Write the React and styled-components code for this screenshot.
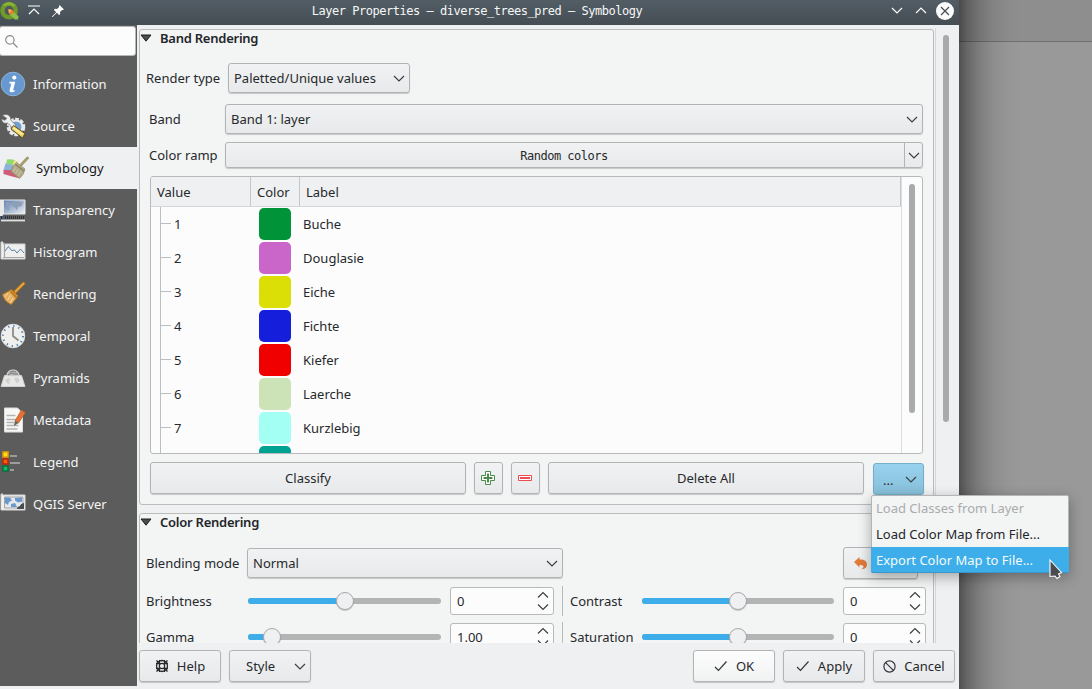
import React from "react";
import styled, { createGlobalStyle, css } from "styled-components";

const Global = createGlobalStyle`
  * { box-sizing: border-box; }
  html, body { margin: 0; height: 100%; overflow: hidden; }
  body {
    font-family: "Noto Sans", "Open Sans", sans-serif;
    font-size: 13px;
    line-height: 18px;
    color: #26292c;
  }
  #root { height: 100%; }
  svg { display: block; flex: none; }
`;

const Desktop = styled.div`
  display: flex;
  width: 1092px;
  height: 689px;
  position: relative;
  overflow: hidden;
  background: #999999;
`;
const Window = styled.div`
  width: 959px;
  height: 689px;
  display: flex;
  flex-direction: column;
  background: #eff0f1;
`;
const Backdrop = styled.div`
  flex: 1;
  background:
    linear-gradient(90deg, rgba(0,0,0,.48) 0, rgba(0,0,0,.33) 8px, rgba(0,0,0,.19) 20px, rgba(0,0,0,.08) 34px, rgba(0,0,0,.02) 50px, rgba(0,0,0,0) 62px),
    linear-gradient(180deg, #8e8e8e 0, #8e8e8e 41px, #707070 41px, #707070 42px, #999999 42px);
`;
const TitleBar = styled.header`
  height: 25px;
  flex: none;
  display: flex;
  align-items: center;
  background: linear-gradient(180deg, #525d65, #454d54);
  color: #f6f7f7;
`;
const TitleSide = styled.div`
  display: flex;
  align-items: center;
  height: 22px;
  margin-top: -4px;
  width: 150px;
  justify-content: ${(p) => (p.$end ? "flex-end" : "flex-start")};
  gap: ${(p) => p.$gap}px;
  padding-right: ${(p) => (p.$end ? 5 : 0)}px;
`;
const WindowControls = styled.div`
  display: flex;
  gap: 12px;
`;
const Mono = styled.span`
  font-family: "DejaVu Sans Mono", "Liberation Mono", monospace;
  font-size: 12px;
  letter-spacing: -0.48px;
  white-space: pre;
`;
const Title = styled.h1`
  flex: 1;
  margin: -3px 5px 0 0;
  text-align: center;
  font-weight: 400;
  font-size: 12px;
  line-height: 18px;
`;
const Body = styled.div`
  flex: 1;
  min-height: 0;
  display: flex;
`;
const Sidebar = styled.nav`
  width: 137px;
  height: 661px;
  flex: none;
  background: #5c5c5c;
`;
const Search = styled.div`
  width: 137px;
  height: 30px;
  margin: 1px 0 7px -1px;
  padding-left: 5px;
  display: flex;
  align-items: center;
  background: #fcfcfc;
  border: 1px solid #b5b7b8;
  border-radius: 3px;
`;
const NavItem = styled.div`
  height: 42px;
  display: flex;
  align-items: center;
  gap: 7px;
  color: #f3f4f4;
  ${(p) => p.$active && css`
    background: #eff0f1;
    color: #17191b;
    padding-left: 3px;
  `}
`;
const Main = styled.main`
  flex: 1;
  display: flex;
  flex-direction: column;
`;
const Scroll = styled.div`
  height: 618px;
  overflow: hidden;
  display: flex;
  flex: none;
`;
const Groups = styled.div`
  width: 799px;
  margin-top: 3px;
  padding: 1px 0 0 2px;
  border-right: 1px solid #d6d8d9;
  display: flex;
  flex-direction: column;
  gap: 8px;
  flex: none;
`;
const Group = styled.section`
  width: 795px;
  height: ${(p) => p.$height}px;
  flex: none;
  border: 1px solid #babcbd;
  border-radius: 3px;
  background: #f3f4f4;
`;
const GroupTitle = styled.h2`
  display: flex;
  align-items: center;
  gap: 8px;
  margin: -1px 0 0;
  height: 18px;
  font-size: 13px;
  font-weight: 600;
  letter-spacing: -0.25px;
  color: #232629;
`;
const Field = styled.div`
  display: flex;
  align-items: center;
  height: ${(p) => p.$height || 30}px;
  margin-top: ${(p) => p.$top}px;
`;
const Label = styled.label`
  width: ${(p) => p.$width}px;
  padding-left: ${(p) => p.$indent || 6}px;
  flex: none;
  white-space: nowrap;
`;
const raised = css`
  border: 1px solid #b1b3b5;
  border-radius: 3px;
  background: linear-gradient(180deg, #f1f2f3, #e8e9ea);
  box-shadow: 0 1px 1px rgba(0, 0, 0, 0.18);
`;
const Combo = styled.div`
  ${raised}
  width: ${(p) => p.$width}px;
  height: 30px;
  padding: 0 4px 0 5px;
  display: flex;
  align-items: center;
  justify-content: space-between;
`;
const Ramp = styled.div`
  ${raised}
  width: 698px;
  height: 26px;
  display: flex;
  align-items: stretch;
`;
const RampName = styled.div`
  flex: 1;
  display: flex;
  align-items: center;
  justify-content: center;
  padding: 1px 2px 0 0;
`;
const RampArrow = styled.div`
  width: 18px;
  border-left: 1px solid #b1b3b5;
  display: flex;
  align-items: center;
  justify-content: center;
`;
const Button = styled.button`
  ${raised}
  width: ${(p) => p.$width}px;
  height: 32px;
  margin: 0;
  padding: 0;
  display: flex;
  align-items: center;
  justify-content: center;
  gap: 8px;
  font: inherit;
  color: inherit;
  flex: none;
  ${(p) => p.$primary && css`background: linear-gradient(180deg, #fdfdfd, #f1f2f2);`}
`;
const IconButton = styled(Button)`
  padding-right: 1px;
`;
const StyleButton = styled(Button)`
  justify-content: space-between;
  padding: 0 4px 0 16px;
`;
const MoreButton = styled(Button)`
  height: 32px;
  margin: 1px 0 0 1px;
  padding: 0 6px 0 9px;
  justify-content: space-between;
  background: linear-gradient(180deg, #98d2ee, #87bfda);
  border-color: #74aecb;
`;
const Dots = styled.span`
  padding-top: 2px;
`;
const Table = styled.div`
  width: 773px;
  height: 278px;
  margin: 8px 0 0 10px;
  border: 1px solid #b7b9ba;
  border-radius: 3px;
  background: #fcfcfc;
  display: flex;
  overflow: hidden;
`;
const TableMain = styled.div`
  width: 751px;
  border-right: 1px solid #dcdedf;
  flex: none;
`;
const TableHead = styled.div`
  height: 30px;
  display: flex;
  background: #eff0f1;
  border-bottom: 1px solid #d5d7d8;
`;
const Th = styled.div`
  width: ${(p) => p.$width}px;
  padding: 6px 0 0 6px;
  border-right: 1px solid #c4c6c7;
`;
const Rows = styled.div`
  margin-left: 9px;
  border-left: 1px solid #bcbebf;
`;
const Row = styled.div`
  height: 34px;
  display: flex;
  align-items: center;
`;
const Branch = styled.span`
  width: 10px;
  height: 1px;
  background: #bcbebf;
  margin-top: -1px;
`;
const Value = styled.span`
  width: 88px;
  padding-left: 3px;
`;
const Swatch = styled.span`
  width: 32px;
  height: 32px;
  border-radius: 5px;
  background: ${(p) => p.$color};
  margin-right: 12px;
`;
const Bar = styled.div`
  width: 6px;
  height: ${(p) => p.$height}px;
  margin: ${(p) => p.$top}px 0 0 7px;
  border-radius: 3px;
  background: #a9aaab;
`;
const Actions = styled.div`
  display: flex;
  gap: 8px;
  margin: 8px 0 0 10px;
  height: 32px;
`;
const Spacer = styled.div`
  flex: 1;
`;
const Reset = styled(Button)`
  justify-content: flex-start;
  padding-left: 10px;
  margin-right: 15px;
`;
const Slider = styled.div`
  width: ${(p) => p.$width}px;
  height: 6px;
  display: flex;
  align-items: center;
  border-radius: 3px;
  background: #b3b4b4;
  flex: none;
`;
const Fill = styled.div`
  width: ${(p) => p.$width}px;
  height: 6px;
  border-radius: 3px 0 0 3px;
  background: #3daee9;
`;
const Knob = styled.div`
  width: 18px;
  height: 18px;
  border: 1px solid #a6a8aa;
  border-radius: 50%;
  background: #eff0f1;
  box-shadow: 0 1px 1px rgba(0, 0, 0, 0.2);
`;
const Spin = styled.div`
  width: ${(p) => p.$width}px;
  height: 28px;
  margin-left: 9px;
  padding: 0 4px 0 6px;
  display: flex;
  align-items: center;
  justify-content: space-between;
  border: 1px solid #b7b9ba;
  border-radius: 3px;
  background: #fcfcfc;
`;
const Divider = styled.div`
  width: 1px;
  height: 30px;
  margin-left: 8px;
  background: #b7b9ba;
`;
const Footer = styled.footer`
  display: flex;
  gap: 8px;
  padding: 7px 4px 0 2px;
`;
const Menu = styled.div`
  position: absolute;
  left: 871px;
  top: 495px;
  width: 198px;
  height: 78px;
  border: 1px solid #b3b5b6;
  border-radius: 2px;
  background: #f3f4f4;
  box-shadow: 0 4px 14px rgba(0, 0, 0, 0.32);
`;
const MenuItem = styled.div`
  height: 26px;
  padding: 3px 0 0 4px;
  white-space: nowrap;
  color: ${(p) => (p.$disabled ? "#a9abac" : p.$selected ? "#f4fafd" : "#232629")};
  ${(p) => p.$selected && css`
    background: #3daee9;
    margin: -1px -1px 0;
    padding: 4px 0 0 5px;
    border-radius: 0 0 2px 2px;
    border-bottom: 1px solid #3597cc;
  `}
`;
const Pointer = styled.svg`
  position: absolute;
  left: 1048px;
  top: 558px;
`;

const Chevron = ({ up, color = "#3b3f43" }) => (
  <svg width="12" height="7" viewBox="0 0 12 7" fill="none" stroke={color} strokeWidth="1.2">
    <path d={up ? "M1 6 6 1l5 5" : "M1 1l5 5 5-5"} />
  </svg>
);
const Steps = () => (
  <svg width="12" height="20" viewBox="0 0 12 20" fill="none" stroke="#3b3f43" strokeWidth="1.2">
    <path d="M1 6.500l5-5 5 5M1 13.500l5 5 5-5" />
  </svg>
);
const Check = () => (
  <svg width="14" height="12" viewBox="0 0 14 12" fill="none" stroke="#33373a" strokeWidth="1.2">
    <path d="M1 7l3.500 3.500L12.500 1.500" />
  </svg>
);
const Forbid = () => (
  <svg width="13" height="13" viewBox="0 0 13 13" fill="none" stroke="#33373a" strokeWidth="1.2">
    <circle cx="6.500" cy="6.500" r="5.600" /><path d="M2.600 2.600l7.800 7.800" />
  </svg>
);
const Lifebuoy = () => (
  <svg width="14" height="14" viewBox="0 0 14 14" fill="none" stroke="#26292c">
    <circle cx="7" cy="7" r="5.500" strokeWidth="1.300" />
    <circle cx="7" cy="7" r="2.700" strokeWidth="1.200" />
    <path d="M1 4.500h3.500V1M9.500 1v3.500H13M13 9.500H9.500V13M4.500 13V9.500H1" strokeWidth="1.300" />
    <path d="M1.500 1.500l2 2M12.500 1.500l-2 2M12.500 12.500l-2-2M1.500 12.500l2-2" strokeWidth="1.400" />
  </svg>
);
const Logo = () => (
  <svg width="20" height="20" viewBox="0 0 21 20">
    <circle cx="9.500" cy="9.500" r="7" fill="none" stroke="#6f9c28" strokeWidth="4.600" />
    <path d="M4 4.500a7.600 7.600 0 0 1 11 0" fill="none" stroke="#8ab536" strokeWidth="2.500" />
    <path d="M9 8.500l3 .3 7.500 7-.5 3.200h-3.500L9 12z" fill="#8cc04a" />
    <path d="M8.500 7.800l4 .7 2.500 3-3 2.500-3-2.500z" fill="#ee7d2e" />
    <path d="M9 8.500l2.800 1-1.600 1.700z" fill="#f9c9a0" />
  </svg>
);
const Shade = () => (
  <svg width="12" height="10" viewBox="0 0 12 10" fill="none" stroke="#fff" strokeWidth="1.200">
    <path d="M0 1h12M1 9l5-5 5 5" />
  </svg>
);
const Pin = () => (
  <svg width="12" height="12" viewBox="0 0 12 12">
    <path d="M7.500 0L12 4.500l-1.300.6-.6-.2L8 7l.2 2.300-1.200.7-2.200-2.200L.6 12H0v-.6l4.200-4.200L2 5l.7-1.200L5 4l2.100-2.100L6.900 1.300z" fill="#fff" />
  </svg>
);
const Close = () => (
  <svg width="18" height="18" viewBox="0 0 18 18">
    <circle cx="9" cy="9" r="9" fill="#fcfcfc" />
    <path d="M5 5l8 8M13 5l-8 8" stroke="#464e55" strokeWidth="1.200" />
  </svg>
);
const Icon = ({ children }) => <svg width="26" height="26" viewBox="0 0 26 26">{children}</svg>;

const InfoIcon = () => (
  <Icon>
    <circle cx="13" cy="13" r="11.800" fill="#6798cf" stroke="#8db4dd" strokeWidth="1" />
    <circle cx="14.300" cy="6.600" r="2.100" fill="#fff" />
    <path d="M9.500 10.800h5.800l-2.200 8.300c0 .8 1 .4 2 -.2l-.3 1.300c-2 1.300-5.600 1.800-5.200-.9l1.700-6.800H9.200z" fill="#fff" />
  </Icon>
);
const SourceIcon = () => (
  <Icon>
    <circle cx="16" cy="14" r="7.500" fill="none" stroke="#e6e7e7" strokeWidth="3.600" strokeDasharray="3.500 1.400" />
    <circle cx="16" cy="14" r="6.500" fill="#729fcf" stroke="#eceded" strokeWidth="2" />
    <path d="M2.500 2.500C6.500 0 11 2.500 10.800 7l5 5.200-3 3L7.500 10C4.500 11 2 9.500 1.500 6l3.500 1.300L6.800 5.300z" fill="#eef0ef" stroke="#707372" strokeWidth=".7" />
    <path d="M13.500 12.500l11.500 8-2.500 4.500-11.500-9z" fill="#f2d35f" stroke="#5e5025" strokeWidth="1" />
    <path d="M13.500 14.800l9 6.500" stroke="#fbf0a8" strokeWidth="1.500" />
  </Icon>
);
const SymbologyIcon = () => (
  <Icon>
    <path d="M4 4.500q5-1 8 1l-1 5-8-1z" fill="#8fdc6c" />
    <path d="M2.500 8.500l9 1.500-2 6-9-1z" fill="#8cb2da" />
    <path d="M11 5.500l5 1-4 5-2.500-.500z" fill="#ecdf8d" />
    <path d="M.5 15l9 0 7 4.500-1.500 3.500q-8-2-14.500-4z" fill="#cf5d78" />
    <path d="M24.500 3l-6.500 7" stroke="#a59e70" strokeWidth="2.800" strokeLinecap="round" />
    <path d="M13.500 7.500l8.500 6.500q-1 5.500-5.500 9.500L8 16.500q1-5.500 5.500-9z" fill="#b3aa8a" stroke="#8b8463" strokeWidth=".7" />
    <path d="M12.500 9.500l8.500 6.500" stroke="#857e60" strokeWidth="1.200" />
    <path d="M12.500 12.500l-2.500 4M15 14.500l-2.500 4M17.500 16.500L15 21" stroke="#d0caae" strokeWidth="1" />
  </Icon>
);
const TransparencyIcon = () => (
  <Icon>
    <defs><linearGradient id="sea" x2="1" y2="1"><stop stopColor="#5479ae" /><stop offset="1" stopColor="#f1f3f4" /></linearGradient></defs>
    <path d="M3.500 3H25v14H3.500z" fill="url(#sea)" stroke="#e9eaea" />
    <path d="M5 5l4-.5 2 2-3 2 1.500 4-2 1zM13 6l4-1.500 6 1-2 4-3 0-1 4-2-3-2-1z" fill="#8e9fb5" />
    <path d="M0 2.500h3.500V19H0z" fill="#e9e9e8" />
    <path d="M1 20.500h24" stroke="#292b2c" strokeWidth="2.500" strokeDasharray="1 1" />
    <path d="M3.500 18v6" stroke="#315d9b" strokeWidth="1.500" /><path d="M1 23.500h24" stroke="#dfe0e0" strokeWidth="1.800" />
  </Icon>
);
const HistogramIcon = () => (
  <Icon>
    <path d="M3 5h22v15H1V3h2z" fill="#efefee" stroke="#d1d2d1" />
    <path d="M4.500 4v14M3 18.500h21" stroke="#a5a7a6" strokeWidth="1.200" />
    <path d="M5 12l3.500-4.500 3 4 3-.5 2.500 3 3.500-4 3.500 4" fill="none" stroke="#5a7ca7" />
  </Icon>
);
const BrushIcon = () => (
  <Icon>
    <path d="M23.500 2.500l-8 8" stroke="#a96b16" strokeWidth="3.600" strokeLinecap="round" />
    <path d="M23.500 2.500l-8 8" stroke="#e2a747" strokeWidth="2" strokeLinecap="round" />
    <path d="M11.500 8.500l6.500 6.500-6.500 8.500C7 22 3.500 18 2.500 13.500z" fill="#e3af62" stroke="#b27216" />
    <path d="M10.500 10l6 6.500" stroke="#c17b1d" strokeWidth="2.500" />
    <path d="M8 12l-3 4M10.500 14.500l-3 4.500M13 17l-3 5" stroke="#f6d9a5" strokeWidth="1" />
  </Icon>
);
const ClockIcon = () => (
  <Icon>
    <circle cx="13" cy="13" r="11.800" fill="#efefee" stroke="#dddedd" />
    <circle cx="13" cy="13" r="10" fill="none" stroke="#4b83bd" strokeWidth="2" strokeDasharray="1.300 3.936" />
    <path d="M13 4v9l5.500 4.500" fill="none" stroke="#8a8b8a" strokeWidth="1.800" />
  </Icon>
);
const PyramidIcon = () => (
  <Icon>
    <path d="M4.500 10.500h17L25 21.500H1z" fill="#e8e8e7" stroke="#cfd0cf" />
    <path d="M7 9.500q1-4.500 6-4.500t6 4.500l1 1.500H6z" fill="#b6b7b6" stroke="#dcdddc" />
    <path d="M10 7q3-2 6 0M8 10l3-2 3 1 4 0" stroke="#777978" fill="none" />
    <path d="M5 15l3-2 3 1-2 2 1 3-3-1zM14 13l4-.5 2 3-3 3-2-3z" fill="#cfd0cf" />
  </Icon>
);
const MetadataIcon = () => (
  <Icon>
    <path d="M4.500 1h13l5 5v19h-18z" fill="#f7f7f6" stroke="#dcdddb" />
    <path d="M6.500 8.500h9M6.500 12.500h9M6.500 15.500h8M6.500 18.500h12M6.500 22h11" stroke="#b3b4b3" strokeWidth="1.300" />
    <path d="M21.500 3l4 2.500-7 10.500-3.500-2.500z" fill="#e07236" stroke="#b8521f" strokeWidth=".6" />
    <path d="M15 13.500l3.500 2.500-4.500 3z" fill="#6d6256" />
  </Icon>
);
const LegendIcon = () => (
  <Icon>
    <path d="M10 7h7M10 14h10M10 21h4" stroke="#9b9c9b" strokeWidth="2" />
    <g strokeWidth="1.500">
      <path d="M3 3h5v5H3z" fill="#fce212" stroke="#e79e06" />
      <path d="M3 10h5v5H3z" fill="#ff5a12" stroke="#bd2800" />
      <path d="M3 17h5v5H3z" fill="#12bd68" stroke="#06723c" />
    </g>
  </Icon>
);
const ServerIcon = () => (
  <Icon>
    <path d="M2 4h23v15H1V3h2" fill="#f2f2f1" stroke="#d3d4d3" />
    <path d="M4.500 6H23v11H4.500z" fill="#e5e9ec" stroke="#8c8e8d" strokeWidth=".8" />
    <path d="M5 6.500h5l2 3-3 1.500-1 3-3-2zM15 7l7-.5v4l-4 1-3-2zM11 13l4-1 2 4h-6z" fill="#6b98cb" />
    <path d="M24 12v6h-7q0-2.500 3-3 .5-2.500 4-3z" fill="#4b4d4d" />
  </Icon>
);
const SearchIcon = () => (
  <svg width="13" height="13" viewBox="0 0 13 13" fill="none" stroke="#8a8c8e" strokeWidth="1.200">
    <circle cx="4.900" cy="4.900" r="4.200" /><path d="M8 8l4.500 4.500" />
  </svg>
);
const Triangle = () => (
  <svg width="12" height="8" viewBox="0 0 12 8"><path d="M1 1h10L6 7.200z" fill="#4d4d4d" stroke="#1f1f1f" /></svg>
);
const PlusIcon = () => (
  <svg width="14" height="14" viewBox="0 0 14 14" fill="#fff" stroke="#4c8a4c">
    <path d="M4.500.5h5v4h4v5h-4v4h-5v-4h-4v-5h4z" /><path d="M7 2.500v9M2.500 7h9" strokeWidth="2" />
  </svg>
);
const MinusIcon = () => (
  <svg width="14" height="6" viewBox="0 0 14 6" fill="#fff" stroke="#ec4b50">
    <path d="M.5.5h13v5H.5z" /><path d="M2 3h10" strokeWidth="2" />
  </svg>
);
const UndoIcon = () => (
  <svg width="13" height="14" viewBox="0 0 13 14">
    <path d="M0 6L5.500 1v2.500c4.500-.3 7.500 1.500 7.500 5 0 2.800-1.900 4.700-5.500 4.500 1.600-.9 2.300-1.900 1.800-3-.5-.7-2-.9-3.800-.9V11.500z" fill="#e07b3a" />
  </svg>
);

const NAV = [
  ["Information", InfoIcon], ["Source", SourceIcon], ["Symbology", SymbologyIcon],
  ["Transparency", TransparencyIcon], ["Histogram", HistogramIcon], ["Rendering", BrushIcon],
  ["Temporal", ClockIcon], ["Pyramids", PyramidIcon], ["Metadata", MetadataIcon],
  ["Legend", LegendIcon], ["QGIS Server", ServerIcon],
];
const CLASSES = [
  ["1", "#009337", "Buche"], ["2", "#ca66c9", "Douglasie"], ["3", "#dbdf06", "Eiche"],
  ["4", "#141edb", "Fichte"], ["5", "#f10000", "Kiefer"], ["6", "#cce3b8", "Laerche"],
  ["7", "#a3fff3", "Kurzlebig"], ["", "#00a292", ""],
];

const Adjust = ({ label, labelWidth, indent, width, fill, value, spin }) => (
  <>
    <Label $width={labelWidth} $indent={indent}>{label}</Label>
    <Slider $width={width}><Fill $width={fill} /><Knob /></Slider>
    <Spin $width={spin}>{value}<Steps /></Spin>
  </>
);

export default function App() {
  return (
    <>
      <Global />
      <Desktop>
        <Window>
          <TitleBar>
            <TitleSide $gap={8}><Logo /><WindowControls><Shade /><Pin /></WindowControls></TitleSide>
            <Title><Mono>Layer Properties — diverse_trees_pred — Symbology</Mono></Title>
            <TitleSide $end $gap={9}>
              <WindowControls><Chevron color="#fff" /><Chevron up color="#fff" /></WindowControls>
              <Close />
            </TitleSide>
          </TitleBar>
          <Body>
            <Sidebar>
              <Search><SearchIcon /></Search>
              {NAV.map(([name, Glyph]) => (
                <NavItem key={name} $active={name === "Symbology"}><Glyph />{name}</NavItem>
              ))}
            </Sidebar>
            <Main>
              <Scroll>
                <Groups>
                  <Group $height={476}>
                    <GroupTitle><Triangle />Band Rendering</GroupTitle>
                    <Field $top={16}>
                      <Label $width={88}>Render type</Label>
                      <Combo $width={182}>Paletted/Unique values<Chevron /></Combo>
                    </Field>
                    <Field $top={11}>
                      <Label $width={85} $indent={9}>Band</Label>
                      <Combo $width={698}>Band 1: layer<Chevron /></Combo>
                    </Field>
                    <Field $top={8} $height={26}>
                      <Label $width={85} $indent={9}>Color ramp</Label>
                      <Ramp>
                        <RampName><Mono>Random colors</Mono></RampName>
                        <RampArrow><Chevron /></RampArrow>
                      </Ramp>
                    </Field>
                    <Table>
                      <TableMain>
                        <TableHead>
                          <Th $width={100}>Value</Th><Th $width={49}>Color</Th><Th $width={601}>Label</Th>
                        </TableHead>
                        <Rows>
                          {CLASSES.map(([value, color, label]) => (
                            <Row key={color}>
                              <Branch /><Value>{value}</Value><Swatch $color={color} />{label}
                            </Row>
                          ))}
                        </Rows>
                      </TableMain>
                      <Bar $height={229} $top={7} />
                    </Table>
                    <Actions>
                      <Button $width={316}>Classify</Button>
                      <IconButton $width={29}><PlusIcon /></IconButton>
                      <IconButton $width={29}><MinusIcon /></IconButton>
                      <Button $width={316}>Delete All</Button>
                      <MoreButton $width={51}><Dots>...</Dots><Chevron /></MoreButton>
                    </Actions>
                  </Group>
                  <Group $height={160}>
                    <GroupTitle><Triangle />Color Rendering</GroupTitle>
                    <Field $top={16} $height={32}>
                      <Label $width={107}>Blending mode</Label>
                      <Combo $width={316}>Normal<Chevron /></Combo>
                      <Spacer />
                      <Reset $width={75}><UndoIcon /></Reset>
                    </Field>
                    <Field $top={7}>
                      <Adjust label="Brightness" labelWidth={108} width={193} fill={88} value="0" spin={104} />
                      <Divider />
                      <Adjust label="Contrast" labelWidth={79} indent={7} width={192} fill={87} value="0" spin={83} />
                    </Field>
                    <Field $top={6}>
                      <Adjust label="Gamma" labelWidth={108} width={193} fill={15} value="1.00" spin={104} />
                      <Divider />
                      <Adjust label="Saturation" labelWidth={79} indent={7} width={192} fill={87} value="0" spin={83} />
                    </Field>
                  </Group>
                </Groups>
                <Bar $height={387} $top={10} />
              </Scroll>
              <Footer>
                <Button $width={82}><Lifebuoy />Help</Button>
                <StyleButton $width={82}>Style<Chevron /></StyleButton>
                <Spacer />
                <Button $width={82} $primary><Check />OK</Button>
                <Button $width={82}><Check />Apply</Button>
                <Button $width={82}><Forbid />Cancel</Button>
              </Footer>
            </Main>
          </Body>
        </Window>
        <Backdrop />
        <Menu>
          <MenuItem $disabled>Load Classes from Layer</MenuItem>
          <MenuItem>Load Color Map from File...</MenuItem>
          <MenuItem $selected>Export Color Map to File...</MenuItem>
        </Menu>
        <Pointer width="16" height="24" viewBox="0 0 16 24">
          <path d="M2 2l11.500 12.500-3 1.500 1.500 2.500-3 2-2-2.500-5 .5z" fill="#4a4b4c" stroke="#fff" strokeWidth="1.100" />
        </Pointer>
      </Desktop>
    </>
  );
}
